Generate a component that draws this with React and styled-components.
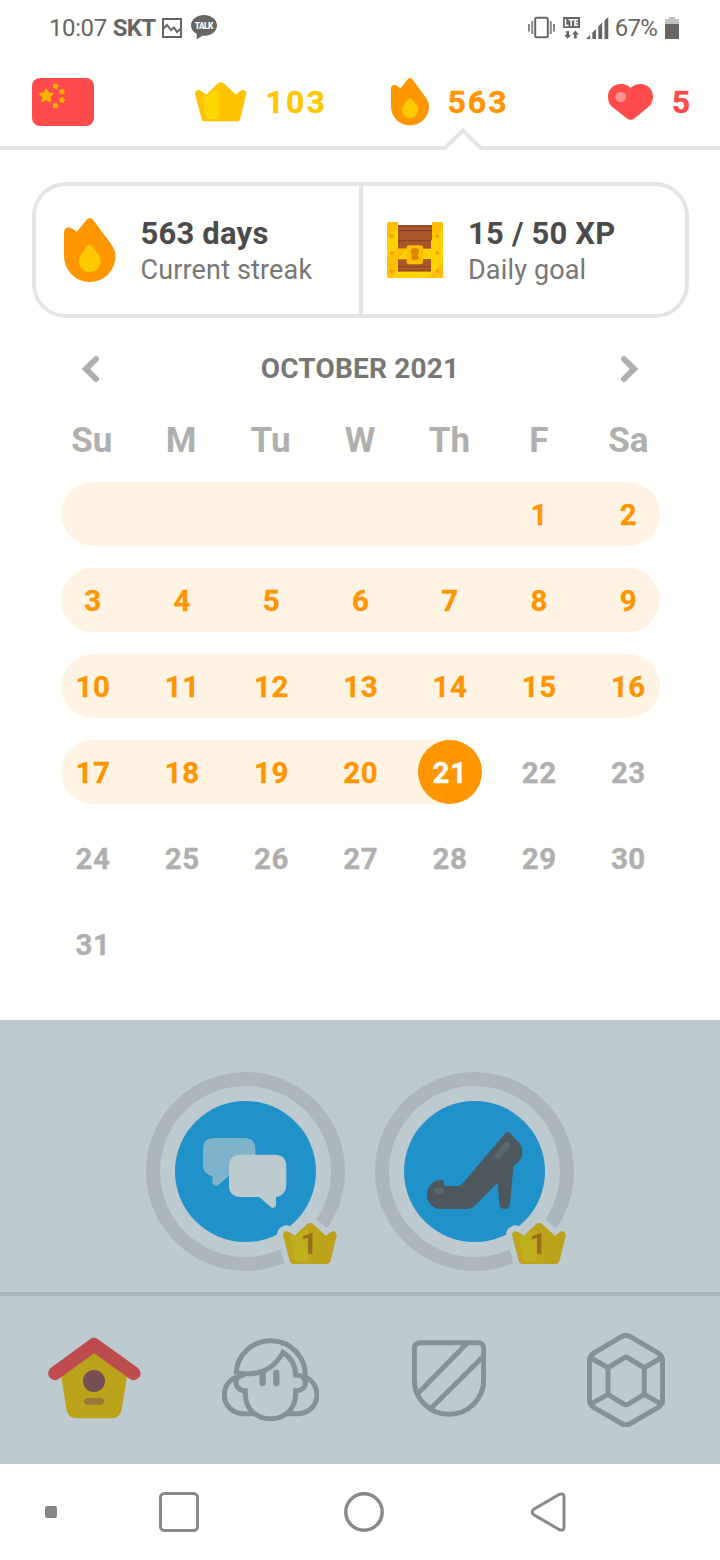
import React from 'react';
import styled, { createGlobalStyle } from 'styled-components';

const GlobalStyle = createGlobalStyle`
    * {
        box-sizing: border-box;
    }
    body {
        margin: 0;
        background: #fffffd;
        font-family: Roboto, 'Liberation Sans', sans-serif;
    }
    svg {
        display: block;
        flex: none;
    }
`;

const DAYS = ['Su', 'M', 'Tu', 'W', 'Th', 'F', 'Sa'];
const TODAY = 21;
const WEEKS = [
    ['', '', '', '', '', 1, 2],
    [3, 4, 5, 6, 7, 8, 9],
    [10, 11, 12, 13, 14, 15, 16],
    [17, 18, 19, 20, 21, 22, 23],
    [24, 25, 26, 27, 28, 29, 30],
    [31, '', '', '', '', '', ''],
];

const Screen = styled.div`
    width: 720px;
    height: 1560px;
    display: flex;
    flex-direction: column;
    overflow: hidden;
    background: #fffffd;
`;

/* status bar */
const StatusBarStyle = styled.div`
    height: 54px;
    display: flex;
    align-items: center;
    justify-content: space-between;
    padding: 1px 41px 0 49px;
    color: #666664;
    font-size: 24px;
    .left,
    .right {
        display: flex;
        align-items: center;
    }
    .time {
        letter-spacing: -0.4px;
    }
    .carrier {
        margin: 0 7px 0 6px;
        font-weight: bold;
        letter-spacing: -0.8px;
    }
    .talk {
        margin-left: 9px;
    }
    .lte {
        margin: 0 6px 0 8px;
    }
    .percent {
        margin: 0 8px 0 6px;
        letter-spacing: -0.8px;
    }
`;
const StatusBar = () => (
    <StatusBarStyle>
        <div className="left">
            <span className="time">10:07</span>
            <span className="carrier">SKT</span>
            <svg width="20" height="20" viewBox="0 0 20 20" fill="none" stroke="#666664" strokeWidth="2">
                <rect x="1" y="1" width="18" height="18" />
                <path d="M1 11 L5 7 L9 12 L12 9.5 L15 14 L19 10.5" />
            </svg>
            <svg className="talk" width="26" height="25" viewBox="0 0 26 25">
                <path d="M13 0 C20 0 26 4.6 26 10.4 C26 16.3 20 20.8 13 20.8 L11.5 20.7 L5.5 24.5 L6 19 C2.5 17.2 0 14 0 10.4 C0 4.6 6 0 13 0Z" fill="#666664" />
                <text x="13" y="14" textAnchor="middle" fontSize="8.3" fontWeight="900" fill="#fffffd" textLength="18.5">TALK</text>
            </svg>
        </div>
        <div className="right">
            <svg width="27" height="23" viewBox="0 0 27 23" fill="none" stroke="#666664">
                <rect x="7.2" y="1.7" width="12.6" height="19.6" rx="1.5" strokeWidth="2" />
                <path d="M4.2 5 V18 M22.8 5 V18" strokeWidth="2" stroke="#8c8c8a" />
                <path d="M1 8 V15.5 M26 8 V15.5" strokeWidth="1.6" />
            </svg>
            <svg className="lte" width="17" height="22" viewBox="0 0 17 22">
                <rect width="17" height="11" fill="#666664" />
                <path d="M2.5 2 V8.5 H5.5 M5.5 2.7 H11 M8.2 2.7 V9 M15 2.7 H12 V8.3 H15 M12 5.5 H15" fill="none" stroke="#fffffd" strokeWidth="1.5" />
                <path d="M3.3 14 H6 V18 H8 L4.7 21.7 L1.3 18 H3.3Z M11 21.5 H13.7 V17.5 H15.8 L12.4 13.5 L9 17.5 H11Z" fill="#666664" />
            </svg>
            <svg width="23" height="22" viewBox="0 0 23 22" fill="#666664">
                <path d="M0 22 L4 18 V22Z M6.3 22 V15.5 L10 12 V22Z M12.3 22 V9.5 L16.2 5.5 V22Z M18.5 22 V3.5 L22.3 0 V22Z" />
            </svg>
            <span className="percent">67%</span>
            <svg width="14" height="22" viewBox="0 0 14 22">
                <path d="M4 0 H10 V2 H14 V7 H0 V2 H4Z" fill="#c2c2c0" />
                <rect y="7" width="14" height="15" fill="#666664" />
            </svg>
        </div>
    </StatusBarStyle>
);

/* shared drawings */
const CROWN = 'M23.6 1.5 Q27 -1.3 30.7 1.5 L42.8 12.8 L48 8.9 C51.500 7 54.400 10 53.600 13 L47.500 38 Q46.600 41 43.600 41 L10.6 41 Q7.6 41 6.8 38 L0.2 13 C-.6 10 2.4 7 5.8 8.9 L12 12.8Z';
const CROWN_SHINE = 'M7 13.6 L12.5 13.6 L18 8.9 Q21 7.5 25 8 V36 Q25 38.7 22.5 38.7 H15 Q12.3 38.7 11.6 35.5Z';

const Flame = ({ width, height }) => (
    <svg width={width} height={height} viewBox="0 0 154 191" preserveAspectRatio="none">
        <path d="M0 42 C0 28 15 24 27 33 L38 42 L65 8 Q77 -8 89 8 L138 74 C149 89 154 101 154 114 A77 77 0 0 1 0 114Z" fill="#ff9600" />
        <path d="M71 83 Q77 76 83 83 L103 108 C108 115 110 121 110 128 A33 33 0 0 1 44 128 C44 121 46 115 51 108Z" fill="#ffc800" />
    </svg>
);

const STAR = 'M0 -6 L1.9 -2.3 L6 -1.7 L3.1 1.4 L3.7 5.5 L0 3.6 L-3.7 5.5 L-3.1 1.4 L-6 -1.7 L-1.9 -2.3Z';
const SMALL_STARS = [[23.5, 8], [30, 13.5], [30, 22], [23.5, 27.5]];

/* top stats */
const TopBarStyle = styled.div`
    position: relative;
    height: 96px;
    display: flex;
    align-items: center;
    padding: 4px 29px 0 32px;
    border-bottom: 4px solid #e5e5e5;
`;
const Stat = styled.div`
    display: flex;
    align-items: center;
    gap: ${(props) => props.$gap}px;
    margin-left: ${(props) => props.$left}px;
    color: ${(props) => props.$color};
    font-size: 32px;
    font-weight: bold;
    letter-spacing: 2.1px;
    -webkit-text-stroke: 0.4px;
`;
const Caret = styled.svg`
    position: absolute;
    left: 441px;
    bottom: -4px;
`;
const TopBar = () => (
    <TopBarStyle>
        <svg width="62" height="48" viewBox="0 0 62 48">
            <rect width="62" height="48" rx="8" fill="#ff4b4b" />
            <g fill="#ffb200" stroke="#ffb200" strokeLinejoin="round">
                <path d={STAR} transform="translate(14.3 17.5) scale(1.03)" strokeWidth="1.8" />
                {SMALL_STARS.map(([x, y]) => (
                    <path key={`${x}-${y}`} d={STAR} transform={`translate(${x} ${y}) scale(.43) rotate(15)`} strokeWidth="2.6" />
                ))}
            </g>
        </svg>
        <Stat $color="#ffc800" $left={101} $gap={19}>
            <svg width="51.5" height="39.5" viewBox="0 0 54 41">
                <path d={CROWN} fill="#ffc200" />
                <path d={CROWN_SHINE} fill="#ffd600" />
            </svg>
            <span>103</span>
        </Stat>
        <Stat $color="#ff9600" $left={64.5} $gap={18}>
            <Flame width={38} height={47.5} />
            <span>563</span>
        </Stat>
        <Stat $color="#ff4b4b" $left={99} $gap={19}>
            <svg width="45" height="36" viewBox="0 0 135 108">
                <path d="M38 0 C52 0 60 4 68 12 C76 4 84 0 98 0 C118 0 135 16 135 38 C135 51 130 62 120 70 L80 103 Q68 112 56 103 L14 70 C4 62 0 51 0 38 C0 16 17 0 38 0Z" fill="#ff4b4b" />
                <circle cx="38" cy="39" r="16" fill="#ff9393" />
            </svg>
            <span>5</span>
        </Stat>
        <Caret width="44" height="24" viewBox="0 0 44 24">
            <path d="M2 24 L22 4 L42 24Z" fill="#fffffd" />
            <path d="M0 22 H4 L22 4.5 L40 22 H44" fill="none" stroke="#e5e5e5" strokeWidth="4" />
        </Caret>
    </TopBarStyle>
);

/* streak + goal card */
const SummaryStyle = styled.div`
    height: 136px;
    margin: 32px 31px 0 32px;
    display: flex;
    border: 4px solid #e5e5e5;
    border-radius: 34px;
`;
const SummaryItem = styled.div`
    display: flex;
    align-items: center;
    width: ${(props) => (props.$divider ? 327 : 322)}px;
    padding-left: ${(props) => (props.$divider ? 28 : 24)}px;
    border-right: ${(props) => (props.$divider ? '4px solid #e5e5e5' : 'none')};
    .text {
        margin-left: 25px;
        padding-top: 3px;
    }
    .title {
        font-size: 31px;
        line-height: 37px;
        font-weight: bold;
        letter-spacing: 0.2px;
        color: #4b4b4b;
    }
    .sub {
        font-size: 27px;
        line-height: 36px;
        letter-spacing: 0.15px;
        color: #777776;
    }
`;
const Chest = () => (
    <svg width="56" height="56" viewBox="0 0 168 168">
        <rect x="20" y="10" width="125" height="150" fill="#a9572a" />
        <path d="M33 12 H135 M33 26 H135 M33 56 H135 M33 147 H135" stroke="#8b4525" strokeWidth="4" />
        <path d="M6 0 H33 V168 H6 Q0 168 0 162 V6 Q0 0 6 0Z" fill="#ffbe00" />
        <path d="M135 0 H162 Q168 0 168 6 V168 H132 V55 H135Z" fill="#ffd200" />
        <path d="M135 0 H162 Q168 0 168 6 V21 L135 54Z" fill="#ffbe00" />
        <path d="M0 50 L33 19 V76 L0 107Z" fill="#ffd200" />
        <rect x="33" y="80" width="99" height="32" fill="#ffd200" />
        <path d="M33 80 H62 L33 108Z" fill="#ffbe00" />
        <path d="M12 168 L68 112 H33 V148 H132 V168Z" fill="#ffd200" />
        <rect x="33" y="112" width="99" height="36" fill="#a9572a" />
        <path d="M33 134 H132 M33 146 H132" stroke="#8b4525" strokeWidth="3" />
        <path d="M120 168 L168 122 V162 Q168 168 162 168Z" fill="#ffbe00" />
        <rect x="59" y="70" width="49" height="57" rx="7" fill="#ffbe00" />
        <path d="M83 78 C98 78 98 92 92 96 L95 110 Q83 118 72 110 L75 97 C68 91 70 78 83 78Z" fill="#dd8500" />
        {[43, 93, 148].map((y) => (
            <g key={y} fill="#f7a000">
                <circle cx="15" cy={y} r="6" />
                <circle cx="151" cy={y} r="5.5" />
            </g>
        ))}
    </svg>
);

/* calendar */
const MonthBar = styled.div`
    height: 100px;
    display: flex;
    align-items: center;
    justify-content: space-between;
    padding: 2px 81px 0;
    color: #777776;
    font-size: 28px;
    font-weight: bold;
    span {
        padding-bottom: 2px;
        letter-spacing: 0.2px;
    }
`;
const Arrow = ({ d }) => (
    <svg width="18" height="28" viewBox="0 0 18 28" fill="none" stroke="#afafaf" strokeWidth="6" strokeLinecap="round">
        <path d={d} />
    </svg>
);
const WeekGrid = styled.div`
    display: grid;
    grid-template-columns: repeat(7, 1fr);
    align-items: center;
    margin: 0 47px;
    text-align: center;
    font-weight: bold;
`;
const WeekHeader = styled(WeekGrid)`
    height: 44px;
    margin-bottom: 20px;
    color: #afafaf;
    font-size: 35px;
`;
const Weeks = styled.div`
    display: flex;
    flex-direction: column;
    gap: 22px;
`;
const Week = styled.div`
    height: 64px;
    margin: 0 60px 0 61px;
    border-radius: 32px;
    background: ${(props) =>
        props.$filled ? `linear-gradient(90deg, #fff4e4 ${props.$filled}px, transparent ${props.$filled}px)` : 'none'};
    ${WeekGrid} {
        margin: 0 -13px 0 -12.6px;
    }
`;
const Day = styled.span`
    width: 64px;
    height: 64px;
    justify-self: center;
    border-radius: 50%;
    font-size: 29.5px;
    line-height: 67px;
    letter-spacing: 0.5px;
    color: ${(props) => (props.$today ? '#fff' : props.$done ? '#ff9600' : '#afafaf')};
    background: ${(props) => (props.$today ? '#ff9600' : 'none')};
    -webkit-text-stroke: 0.3px;
`;
const filledWidth = (week) => {
    if (week.includes(TODAY)) return 389;
    return week[6] && week[6] < TODAY ? 599 : 0;
};

/* skill tree */
const Tree = styled.div`
    height: 272px;
    margin-top: 44px;
    padding-top: 52px;
    display: flex;
    justify-content: center;
    gap: 30px;
    background: #bdcacf;
`;
const SkillStyle = styled.div`
    position: relative;
    width: 199px;
    height: 199px;
    padding: 15px;
    border: 14px solid #abb7bc;
    border-radius: 50%;
    .disc {
        width: 141px;
        height: 141px;
        border-radius: 50%;
        background: #2091c9;
    }
`;
const Badge = styled.div`
    position: absolute;
    left: 114.5px;
    top: 129px;
    width: 70px;
    height: 57px;
    svg {
        position: absolute;
    }
    span {
        position: absolute;
        left: 0;
        width: 69px;
        top: 9px;
        text-align: center;
        font-size: 30px;
        line-height: 40px;
        font-weight: bold;
        color: #9c6d1c;
    }
`;
const Skill = ({ children }) => (
    <SkillStyle>
        <div className="disc">
            <svg width="141" height="141" viewBox="87 87 423 423">
                {children}
            </svg>
        </div>
        <Badge>
            <svg width="70" height="57" viewBox="-8 -8 70 57">
                <path d={CROWN} fill="#bdcacf" stroke="#bdcacf" strokeWidth="12" strokeLinejoin="round" />
                <path d={CROWN} fill="#bba31c" />
                <path d={CROWN_SHINE} fill="#beb01c" />
            </svg>
            <span>1</span>
        </Badge>
    </SkillStyle>
);

/* tab bar */
const Tabs = styled.div`
    height: 172px;
    display: flex;
    align-items: center;
    border-top: 4px solid #a9b5ba;
    background: #bdcacf;
    padding: 0 55px 4px 48px;
    .face {
        margin: 2px 0 0 81.5px;
    }
    .shield {
        margin: 1px 0 0 92.5px;
    }
    .gem {
        margin: 4px 0 0 101px;
    }
`;
const LineIcon = styled.svg`
    fill: none;
    stroke: #849197;
    stroke-width: 15;
`;

/* android navigation */
const SystemNav = styled.div`
    height: 96px;
    display: flex;
    align-items: center;
    padding-left: 45px;
    background: #fff;
    svg:nth-child(2) {
        margin-left: 102px;
    }
    svg:nth-child(3) {
        margin-left: 144.5px;
    }
    svg:nth-child(4) {
        margin-left: 146px;
    }
`;

const App = () => {
    return (
        <Screen>
            <GlobalStyle />
            <StatusBar />
            <TopBar />
            <SummaryStyle>
                <SummaryItem $divider>
                    <Flame width={51.5} height={64} />
                    <div className="text">
                        <div className="title">563 days</div>
                        <div className="sub">Current streak</div>
                    </div>
                </SummaryItem>
                <SummaryItem>
                    <Chest />
                    <div className="text">
                        <div className="title">15 / 50 XP</div>
                        <div className="sub">Daily goal</div>
                    </div>
                </SummaryItem>
            </SummaryStyle>
            <MonthBar>
                <Arrow d="M15 4 L5 14 L15 24" />
                <span>OCTOBER 2021</span>
                <Arrow d="M3 4 L13 14 L3 24" />
            </MonthBar>
            <WeekHeader>
                {DAYS.map((day) => (
                    <span key={day}>{day}</span>
                ))}
            </WeekHeader>
            <Weeks>
                {WEEKS.map((week, i) => (
                    <Week key={i} $filled={filledWidth(week)}>
                        <WeekGrid>
                            {week.map((day, j) => (
                                <Day key={j} $done={day < TODAY} $today={day === TODAY}>
                                    {day}
                                </Day>
                            ))}
                        </WeekGrid>
                    </Week>
                ))}
            </Weeks>
            <Tree>
                <Skill>
                    <path d="M204 198 H295 Q328 198 328 231 V312 H248 L217 339 Q207 346 199 334 V312 Q171 307 171 279 V231 Q171 198 204 198Z" fill="#7fb3cb" />
                    <path d="M285 248 H385 Q421 248 421 284 V339 Q421 370 390 375 V400 Q386 412 375 406 L340 375 H285 Q249 375 249 339 V284 Q249 248 285 248Z" fill="#bdcacf" />
                </Skill>
                <Skill>
                    <path d="M391 184 Q398 176 405 184 L430 209 Q442 223 442 240 Q442 256 433 266 L415 284 L405 396 Q403 411 388 411 Q374 410 373 397 L368 332 L305 396 Q292 411 275 411 H198 C174 411 156 392 156 369 C156 342 176 324 198 324 Q206 324 206 331 Q205 342 214 342 H245 Q257 342 265 332Z" fill="#4c585e" />
                    <path d="M369 252 L396 220" stroke="#5a686e" strokeWidth="20" strokeLinecap="round" />
                    <rect x="177" y="347" width="28" height="20" rx="10" fill="#5a686e" />
                </Skill>
            </Tree>
            <Tabs>
                <svg width="92.7" height="81.3" viewBox="54 170 278 244">
                    <path d="M93 285 L192 210 L292 285 L275 386 Q271 414 244 414 H141 Q113 414 109 386Z" fill="#bba31c" />
                    <path d="M75 279 L192 193 L311 279" fill="none" stroke="#be4c4f" strokeWidth="41" strokeLinecap="round" strokeLinejoin="round" />
                    <circle cx="192" cy="302" r="33" fill="#764f56" />
                    <rect x="162" y="353" width="60" height="20" rx="10" fill="#977b38" />
                </svg>
                <LineIcon className="face" width="97.3" height="84" viewBox="577 174 292 252">
                    <path d="M619 285 A104 104 0 0 1 827 293" />
                    <path d="M620 294 C596 304 584 325 584 348 C584 378 608 404 640 404 H680" />
                    <path d="M826 294 C850 304 862 325 862 348 C862 378 838 404 806 404 H766" />
                    <path d="M619 281 C682 293 730 275 760 220 C785 235 798 262 798 288 C815 288 827 296 827 311 C827 325 816 335 798 335 V345 C798 390 765 419 723 419 C680 419 647 390 647 345 V335 C630 335 619 325 619 310 C619 296 630 288 646 287" />
                    <path d="M699 282 V312 M740 282 V312" strokeWidth="19" strokeLinecap="round" />
                </LineIcon>
                <LineIcon className="shield" width="74" height="77" viewBox="66 181 222 231">
                    <path d="M92 189 H263 Q281 189 281 208 V300 A104 104 0 0 1 73 300 V208 Q73 189 92 189Z" />
                    <path d="M232 190 L85 340 M281 229 L123 386" />
                </LineIcon>
                <LineIcon className="gem" width="78" height="94.5" viewBox="591 158 234 283" strokeLinejoin="round">
                    <path d="M696 168 Q708 162 720 168 L806 219 Q818 228 818 242 V358 Q818 371 806 380 L720 430 Q708 437 696 430 L610 380 Q598 371 598 358 V242 Q598 228 610 219Z" />
                    <path d="M701 233 Q708 227 715 233 L763 262 V342 L715 371 Q708 376 701 371 L654 342 V262Z" />
                    <path d="M602 232 L654 262 M814 232 L763 262 M602 371 L654 342 M814 371 L763 342" />
                </LineIcon>
            </Tabs>
            <SystemNav>
                <svg width="12" height="12">
                    <rect width="12" height="12" rx="2" fill="#888" />
                </svg>
                <svg width="40" height="40" fill="none" stroke="#888" strokeWidth="3">
                    <rect x="1.5" y="1.5" width="37" height="37" rx="4" />
                </svg>
                <svg width="40" height="40" fill="none" stroke="#888" strokeWidth="3.5">
                    <circle cx="20" cy="20" r="18.2" />
                </svg>
                <svg width="37" height="40" fill="none" stroke="#888" strokeWidth="3">
                    <path d="M29 2.5 L3.5 17.5 Q1 20 3.5 22.5 L29 37.5 Q34 39.5 34 35 V5 Q34 .5 29 2.5Z" />
                </svg>
            </SystemNav>
        </Screen>
    );
};

export default App;
